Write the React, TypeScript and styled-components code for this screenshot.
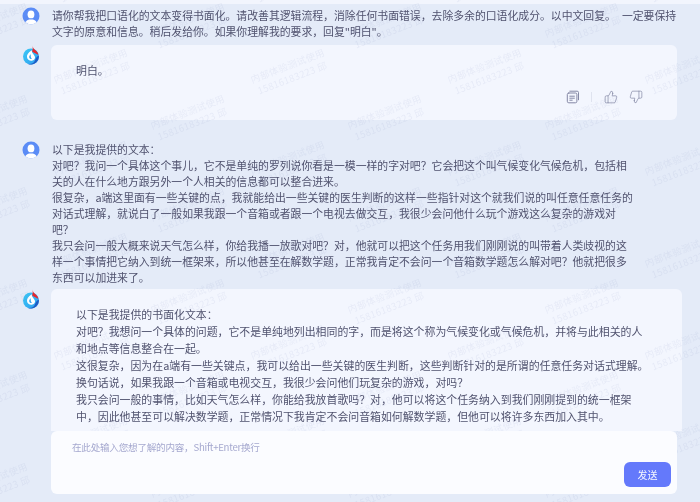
import React from "react";
import styled, { createGlobalStyle } from "styled-components";
import { ThumbsUp, ThumbsDown } from "lucide-react";

const Global = createGlobalStyle`
  html, body { margin: 0; padding: 0; background: #e4ebf8; }
  * { box-sizing: border-box; }
`;

const Page = styled.div`
  position: relative;
  width: 700px;
  height: 502px;
  overflow: hidden;
  display: flex;
  flex-direction: column;
  background: #e4ebf8;
  color: #50526e;
  font-family: "Noto Sans CJK SC", "Noto Sans", sans-serif;
  font-size: 10.85px;
  filter: blur(0.3px);
`;

const TopStrip = styled.div`
  flex: none;
  height: 4px;
  background: #f2f5fd;
`;

const Conversation = styled.div`
  flex: 1;
  min-height: 0;
  overflow: hidden;
  display: flex;
  flex-direction: column;
`;

const Row = styled.div<{ $top: number }>`
  flex: none;
  display: flex;
  align-items: flex-start;
  padding: ${(p) => p.$top}px 23px 0 22px;
`;

const AvatarSlot = styled.div`
  flex: none;
  width: 29px;
  height: 20px;
`;

const UserText = styled.div`
  line-height: 16px;
  margin-left: 1px;
`;

const Line = styled.div`
  white-space: nowrap;
`;

const WideGap = styled.span`
  display: inline-block;
  width: 6px;
`;

const Card = styled.div`
  flex: 1;
  display: flex;
  flex-direction: column;
  padding: 17px 34px 16px 25px;
  background: #f3f6fe;
  border-radius: 6px;
  font-size: 10.9px;
  line-height: 17px;
`;

const Actions = styled.div`
  display: flex;
  justify-content: flex-end;
  align-items: center;
  margin-top: 11px;
  height: 14px;
  color: #8488a5;
`;

const Divider = styled.span`
  width: 1px;
  height: 10px;
  background: #dfe3ef;
  margin: 0 12px 0 11px;
`;

const ThumbGap = styled.span`
  width: 11px;
`;

const Composer = styled.div`
  position: relative;
  z-index: 2;
  flex: none;
  height: 63px;
  margin: 0 23px 8px 51px;
  padding: 10px 6px 7px 21px;
  display: flex;
  flex-direction: column;
  justify-content: space-between;
  background: #fbfcff;
  border-radius: 6px;
`;

const Placeholder = styled.div`
  font-size: 9.6px;
  letter-spacing: -0.25px;
  line-height: 12px;
  color: #a5a8cf;
  white-space: nowrap;
`;

const SendButton = styled.button`
  align-self: flex-end;
  width: 47px;
  height: 25px;
  padding: 0;
  border: none;
  border-radius: 6px;
  background: #6479fb;
  color: #f4f6ff;
  font: inherit;
  font-size: 10px;
`;

const WatermarkLayer = styled.div`
  position: absolute;
  inset: 0;
  z-index: 1;
  overflow: hidden;
  pointer-events: none;
`;

const Watermark = styled.div`
  position: absolute;
  transform: translate(-50%, -50%) rotate(-21deg);
  color: rgba(105, 118, 170, 0.085);
  font-size: 9.5px;
  line-height: 13px;
  white-space: nowrap;
  text-align: center;
  letter-spacing: 0.3px;
`;

const UserAvatar = () => (
  <svg width="18" height="18" viewBox="0 0 18 18">
    <defs>
      <clipPath id="ua"><circle cx="9" cy="9" r="8.5" /></clipPath>
    </defs>
    <circle cx="9" cy="9" r="8.5" fill="#5b8cf6" />
    <g clipPath="url(#ua)" fill="#fff">
      <ellipse cx="9" cy="7.4" rx="3.4" ry="3.9" />
      <path d="M2.5 18c.3-3.6 3-5 4.6-5.4h3.8c1.6.4 4.3 1.8 4.6 5.4z" />
    </g>
  </svg>
);

const BotLogo = () => (
  <svg width="18" height="20" viewBox="0 0 18 20">
    <defs>
      <linearGradient id="lg" x1="0" y1="0" x2="1" y2="1">
        <stop offset="0" stopColor="#3bc8f5" />
        <stop offset="1" stopColor="#2f9ef0" />
      </linearGradient>
    </defs>
    <circle cx="9" cy="11.5" r="8" fill="url(#lg)" />
    <path d="M16.8 10.5A8 8 0 0 1 6 19c4 .4 6.5-1.5 7.2-4.3.5-1.7 2-3.2 3.6-4.2z" fill="#1f5bc4" />
    <path d="M9.5 5.5C6.3 7.5 4.7 9.7 5 12c.3 2.7 2.6 4.1 4.8 3.8 2.2-.3 3.5-2.1 3.2-3.8-.4-1.6-1.6-2.5-2.5-4-.5-.8-.8-1.5-.5-2.5z" fill="#fff" />
    <path d="M8.8 9.300c-1.300 1-1.900 2.200-1.500 3.400.4 1 1.500 1.500 2.600 1.200-1-.9-1.400-2.700-1.100-4.600z" fill="#3ba8ee" />
    <path d="M10.5.5c.3 2.400 1.300 3.300 3 4.800 1.400 1.200 2.600 2.800 2.800 4.700C14.500 8.600 12 8 10.200 6.500c.6-1.800.7-3.800.3-6z" fill="#e8262b" />
  </svg>
);

const CopyIcon = () => (
  <svg width="14" height="14" viewBox="0 0 14 14" fill="none" stroke="currentColor" strokeWidth="1" strokeLinecap="round" strokeLinejoin="round">
    <path d="M3.8 1.2h7.4a1.300 1.300 0 0 1 1.300 1.300v7.300" />
    <rect x="1.3" y="3" width="9.6" height="9.8" rx="1.5" />
    <path d="M3.8 6.2h4.600M3.800 8.200h4.600M3.800 10.200h2.400" />
  </svg>
);

const userOne: React.ReactNode[] = [
  <>
    请你帮我把口语化的文本变得书面化。请改善其逻辑流程，消除任何书面错误，去除多余的口语化成分。以中文回复。
    <WideGap />
    一定要保持
  </>,
  "文字的原意和信息。稍后发给你。如果你理解我的要求，回复\"明白\"。",
];

const userTwo = [
  "以下是我提供的文本：",
  "对吧？我问一个具体这个事儿，它不是单纯的罗列说你看是一模一样的字对吧？它会把这个叫气候变化气候危机，包括相",
  "关的人在什么地方跟另外一个人相关的信息都可以整合进来。",
  "很复杂，a端这里面有一些关键的点，我就能给出一些关键的医生判断的这样一些指针对这个就我们说的叫任意任意任务的",
  "对话式理解，就说白了一般如果我跟一个音箱或者跟一个电视去做交互，我很少会问他什么玩个游戏这么复杂的游戏对",
  "吧？",
  "我只会问一般大概来说天气怎么样，你给我播一放歌对吧？对，他就可以把这个任务用我们刚刚说的叫带着人类歧视的这",
  "样一个事情把它纳入到统一框架来，所以他甚至在解数学题，正常我肯定不会问一个音箱数学题怎么解对吧？他就把很多",
  "东西可以加进来了。",
];

const botTwo = [
  "以下是我提供的书面化文本：",
  "对吧？我想问一个具体的问题，它不是单纯地列出相同的字，而是将这个称为气候变化或气候危机，并将与此相关的人",
  "和地点等信息整合在一起。",
  "这很复杂，因为在a端有一些关键点，我可以给出一些关键的医生判断，这些判断针对的是所谓的任意任务对话式理解。",
  "换句话说，如果我跟一个音箱或电视交互，我很少会问他们玩复杂的游戏，对吗？",
  "我只会问一般的事情，比如天气怎么样，你能给我放首歌吗？对，他可以将这个任务纳入到我们刚刚提到的统一框架",
  "中，因此他甚至可以解决数学题，正常情况下我肯定不会问音箱如何解数学题，但他可以将许多东西加入其中。",
];

const marks: { x: number; y: number }[] = [];
for (let k = -1; k < 12; k++) {
  const y = 26 + 46 * k;
  const start = k % 2 === 0 ? -7 : 93;
  for (let i = -1; i < 5; i++) marks.push({ x: start + 197 * i, y });
}

const Lines = ({ items }: { items: React.ReactNode[] }) => (
  <>
    {items.map((t, i) => (
      <Line key={i}>{t}</Line>
    ))}
  </>
);

export default function App() {
  return (
    <Page>
      <Global />
      <TopStrip />
      <Conversation>
        <Row $top={3}>
          <AvatarSlot><UserAvatar /></AvatarSlot>
          <UserText><Lines items={userOne} /></UserText>
        </Row>
        <Row $top={6}>
          <AvatarSlot><BotLogo /></AvatarSlot>
          <Card>
            <Line>明白。</Line>
            <Actions>
              <CopyIcon />
              <Divider />
              <ThumbsUp size={14} strokeWidth={1.2} />
              <ThumbGap />
              <ThumbsDown size={14} strokeWidth={1.2} />
            </Actions>
          </Card>
        </Row>
        <Row $top={21}>
          <AvatarSlot><UserAvatar /></AvatarSlot>
          <UserText><Lines items={userTwo} /></UserText>
        </Row>
        <Row $top={4}>
          <AvatarSlot><BotLogo /></AvatarSlot>
          <Card>
            <Lines items={botTwo} />
          </Card>
        </Row>
      </Conversation>
      <Composer>
        <Placeholder>在此处输入您想了解的内容，Shift+Enter换行</Placeholder>
        <SendButton>发送</SendButton>
      </Composer>
      <WatermarkLayer aria-hidden="true">
        {marks.map((m, i) => (
          <Watermark key={i} style={{ left: m.x, top: m.y }}>
            内部体验测试使用
            <br />
            15816183223 邱
          </Watermark>
        ))}
      </WatermarkLayer>
    </Page>
  );
}
